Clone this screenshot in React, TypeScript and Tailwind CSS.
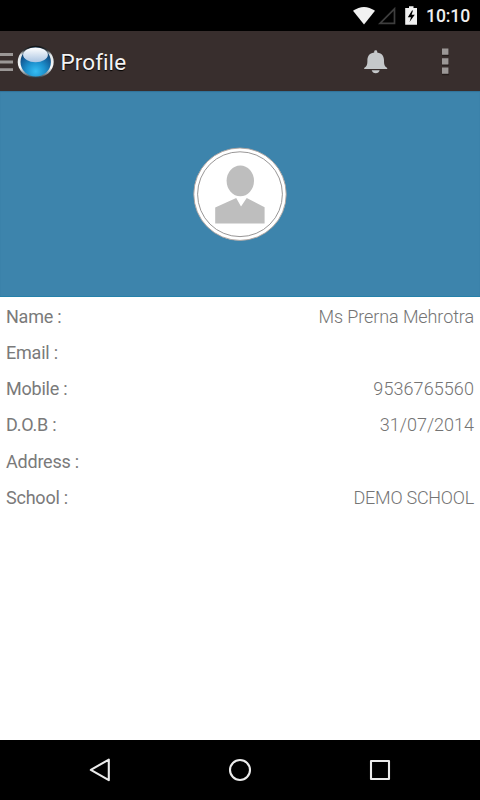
interface ProfileField {
  label: string
  value: string
  tracking?: string
}

const fields: ProfileField[] = [
  { label: 'Name :', value: 'Ms Prerna Mehrotra', tracking: 'tracking-[-0.1px]' },
  { label: 'Email :', value: '' },
  { label: 'Mobile :', value: '9536765560', tracking: 'tracking-[0.08px]' },
  { label: 'D.O.B :', value: '31/07/2014' },
  { label: 'Address :', value: '' },
  { label: 'School :', value: 'DEMO SCHOOL', tracking: 'tracking-[-0.25px]' },
]

function StatusBar() {
  return (
    <div className="flex h-[31px] shrink-0 items-center justify-end bg-black pr-[10px]">
      <svg width="70" height="31" viewBox="0 0 70 31" className="mr-1">
        {/* wifi */}
        <path d="M1 10.8 Q12 3.2 23 10.8 L12 24.4 Z" fill="#f1f1f1" />
        {/* no signal */}
        <path d="M42.5 8.8 V23.3 H28 Z" fill="none" stroke="#3e3e3e" strokeWidth="1.7" />
        {/* battery */}
        <path d="M57 6.3 H61.5 V8 H65 V24.7 H53.2 V8 H57 Z" fill="#f1f1f1" />
        <path d="M60 10.5 L55.8 17.2 H59 L57.5 22 L62.8 14.8 H59.6 L61 10.5 Z" fill="#000" />
      </svg>
      <span className="mt-px w-[44px] whitespace-nowrap text-[17.6px] font-medium leading-[31px] tracking-[-0.1px] text-[#efefef]">10:10</span>
    </div>
  )
}

function OrbLogo() {
  return (
    <svg width="40" height="40" viewBox="0 0 40 40" className="ml-[3px]">
      <defs>
        <radialGradient id="orb" cx="50%" cy="82%" r="75%">
          <stop offset="0" stopColor="#35bdf3" />
          <stop offset="0.4" stopColor="#1d92cf" />
          <stop offset="0.75" stopColor="#14609b" />
          <stop offset="1" stopColor="#103b64" />
        </radialGradient>
        <linearGradient id="shine" x1="0" y1="0" x2="0" y2="1">
          <stop offset="0" stopColor="#ffffff" />
          <stop offset="1" stopColor="#a9c4e2" />
        </linearGradient>
        <linearGradient id="rim" x1="0" y1="0" x2="0" y2="1">
          <stop offset="0" stopColor="#0c0e10" />
          <stop offset="0.14" stopColor="#30363a" />
          <stop offset="0.28" stopColor="#dfe5e8" />
          <stop offset="0.68" stopColor="#f8f9fa" />
          <stop offset="0.88" stopColor="#7b878e" />
          <stop offset="1" stopColor="#1d2d38" />
        </linearGradient>
      </defs>
      <ellipse cx="19.7" cy="20.9" rx="18" ry="16.2" fill="url(#rim)" />
      <ellipse cx="19.7" cy="20.9" rx="15.2" ry="14.6" fill="url(#orb)" />
      <ellipse cx="19.5" cy="13.8" rx="12.4" ry="7.4" fill="url(#shine)" />
    </svg>
  )
}

function ActionBar() {
  return (
    <div className="flex h-[60px] shrink-0 items-center bg-[#382e2d]">
      <svg width="13" height="60" viewBox="0 0 13 60">
        <path d="M0 23.5 H13 M0 31 H13 M0 38.7 H13" stroke="#9b9796" strokeWidth="2.8" />
      </svg>
      <OrbLogo />
      <h1 className="ml-[4.6px] mt-px text-[22.5px] leading-[26px] tracking-[0.06px] text-[#f3f3f3] [text-shadow:0_1px_1px_#000]">Profile</h1>
      <svg width="24" height="26" viewBox="0 0 24 26" className="ml-auto mr-[54px] mt-px">
        <path
          d="M10.2 3.5 V2.6 Q10.2 1.2 11.7 1.2 Q13.2 1.2 13.2 2.6 V3.5 C18.4 4.2 20 7.8 20 11.3 C20 16 20.6 17.2 23.2 19 V20.1 H0.2 V19 C2.8 17.2 3.4 16 3.4 11.3 C3.4 7.8 5 4.2 10.2 3.5 Z"
          fill="#c5c8ca"
        />
        <path d="M7.7 21.2 H15.7 Q14.8 24.2 11.7 24.2 Q8.6 24.2 7.7 21.2 Z" fill="#c5c8ca" />
      </svg>
      <svg width="7" height="60" viewBox="0 0 7 60" className="mr-[31.5px]">
        <path d="M0 24.5 H7 M0 34 H7 M0 43.4 H7" stroke="#241c1b" strokeWidth="1.5" />
        <path d="M0 20.7 H6.4 M0 30.3 H6.4 M0 39.7 H6.4" stroke="#9b9796" strokeWidth="6.2" />
      </svg>
    </div>
  )
}

function Avatar() {
  return (
    <svg width="94" height="94" viewBox="0 0 94 94">
      <circle cx="47" cy="47.2" r="46.2" fill="#fff" stroke="#aaa09c" strokeWidth="0.9" />
      <circle cx="47" cy="47.2" r="42.4" fill="none" stroke="#8c8a8a" strokeWidth="0.9" />
      <ellipse cx="47.3" cy="33.8" rx="13.7" ry="15.4" fill="#bebebe" />
      <path d="M22.2 76.4 V60.4 L43.2 51 L48 59.4 L53.7 51 L71.6 60.2 V76.4 Z" fill="#bebebe" />
    </svg>
  )
}

function NavBar() {
  return (
    <div className="flex h-[60px] shrink-0 items-center justify-between bg-black px-[85px]">
      <svg width="30" height="30" viewBox="0 0 30 30" fill="none" stroke="#ebebeb" strokeWidth="2.1" strokeLinejoin="round">
        <path d="M5.8 14.9 L23.8 4.6 V25.2 Z" />
      </svg>
      <svg width="30" height="30" viewBox="0 0 30 30" fill="none" stroke="#ebebeb" strokeWidth="2.1">
        <circle cx="15" cy="15" r="10" />
      </svg>
      <svg width="30" height="30" viewBox="0 0 30 30" fill="none" stroke="#ebebeb" strokeWidth="2.1" strokeLinejoin="round">
        <rect x="6" y="6" width="18" height="18" />
      </svg>
    </div>
  )
}

export default function App() {
  return (
    <div className="flex h-[800px] w-[480px] flex-col overflow-hidden bg-white font-['Roboto',sans-serif]">
      <StatusBar />
      <ActionBar />
      <div className="flex h-[206px] shrink-0 items-center justify-center border-b border-[#2581aa] bg-[#3d84ac] shadow-[inset_0_1px_1px_#31739a]">
        <Avatar />
      </div>
      <div className="flex flex-1 flex-col pt-[1px]">
        {fields.map((field) => (
          <div key={field.label} className="flex h-[36.25px] items-center justify-between px-[6px] text-[18px]">
            <span className="tracking-[-0.22px] text-[#7a7a7a]">{field.label}</span>
            <span className={`font-light text-[#747474] ${field.tracking ?? ''}`}>{field.value}</span>
          </div>
        ))}
      </div>
      <NavBar />
    </div>
  )
}
